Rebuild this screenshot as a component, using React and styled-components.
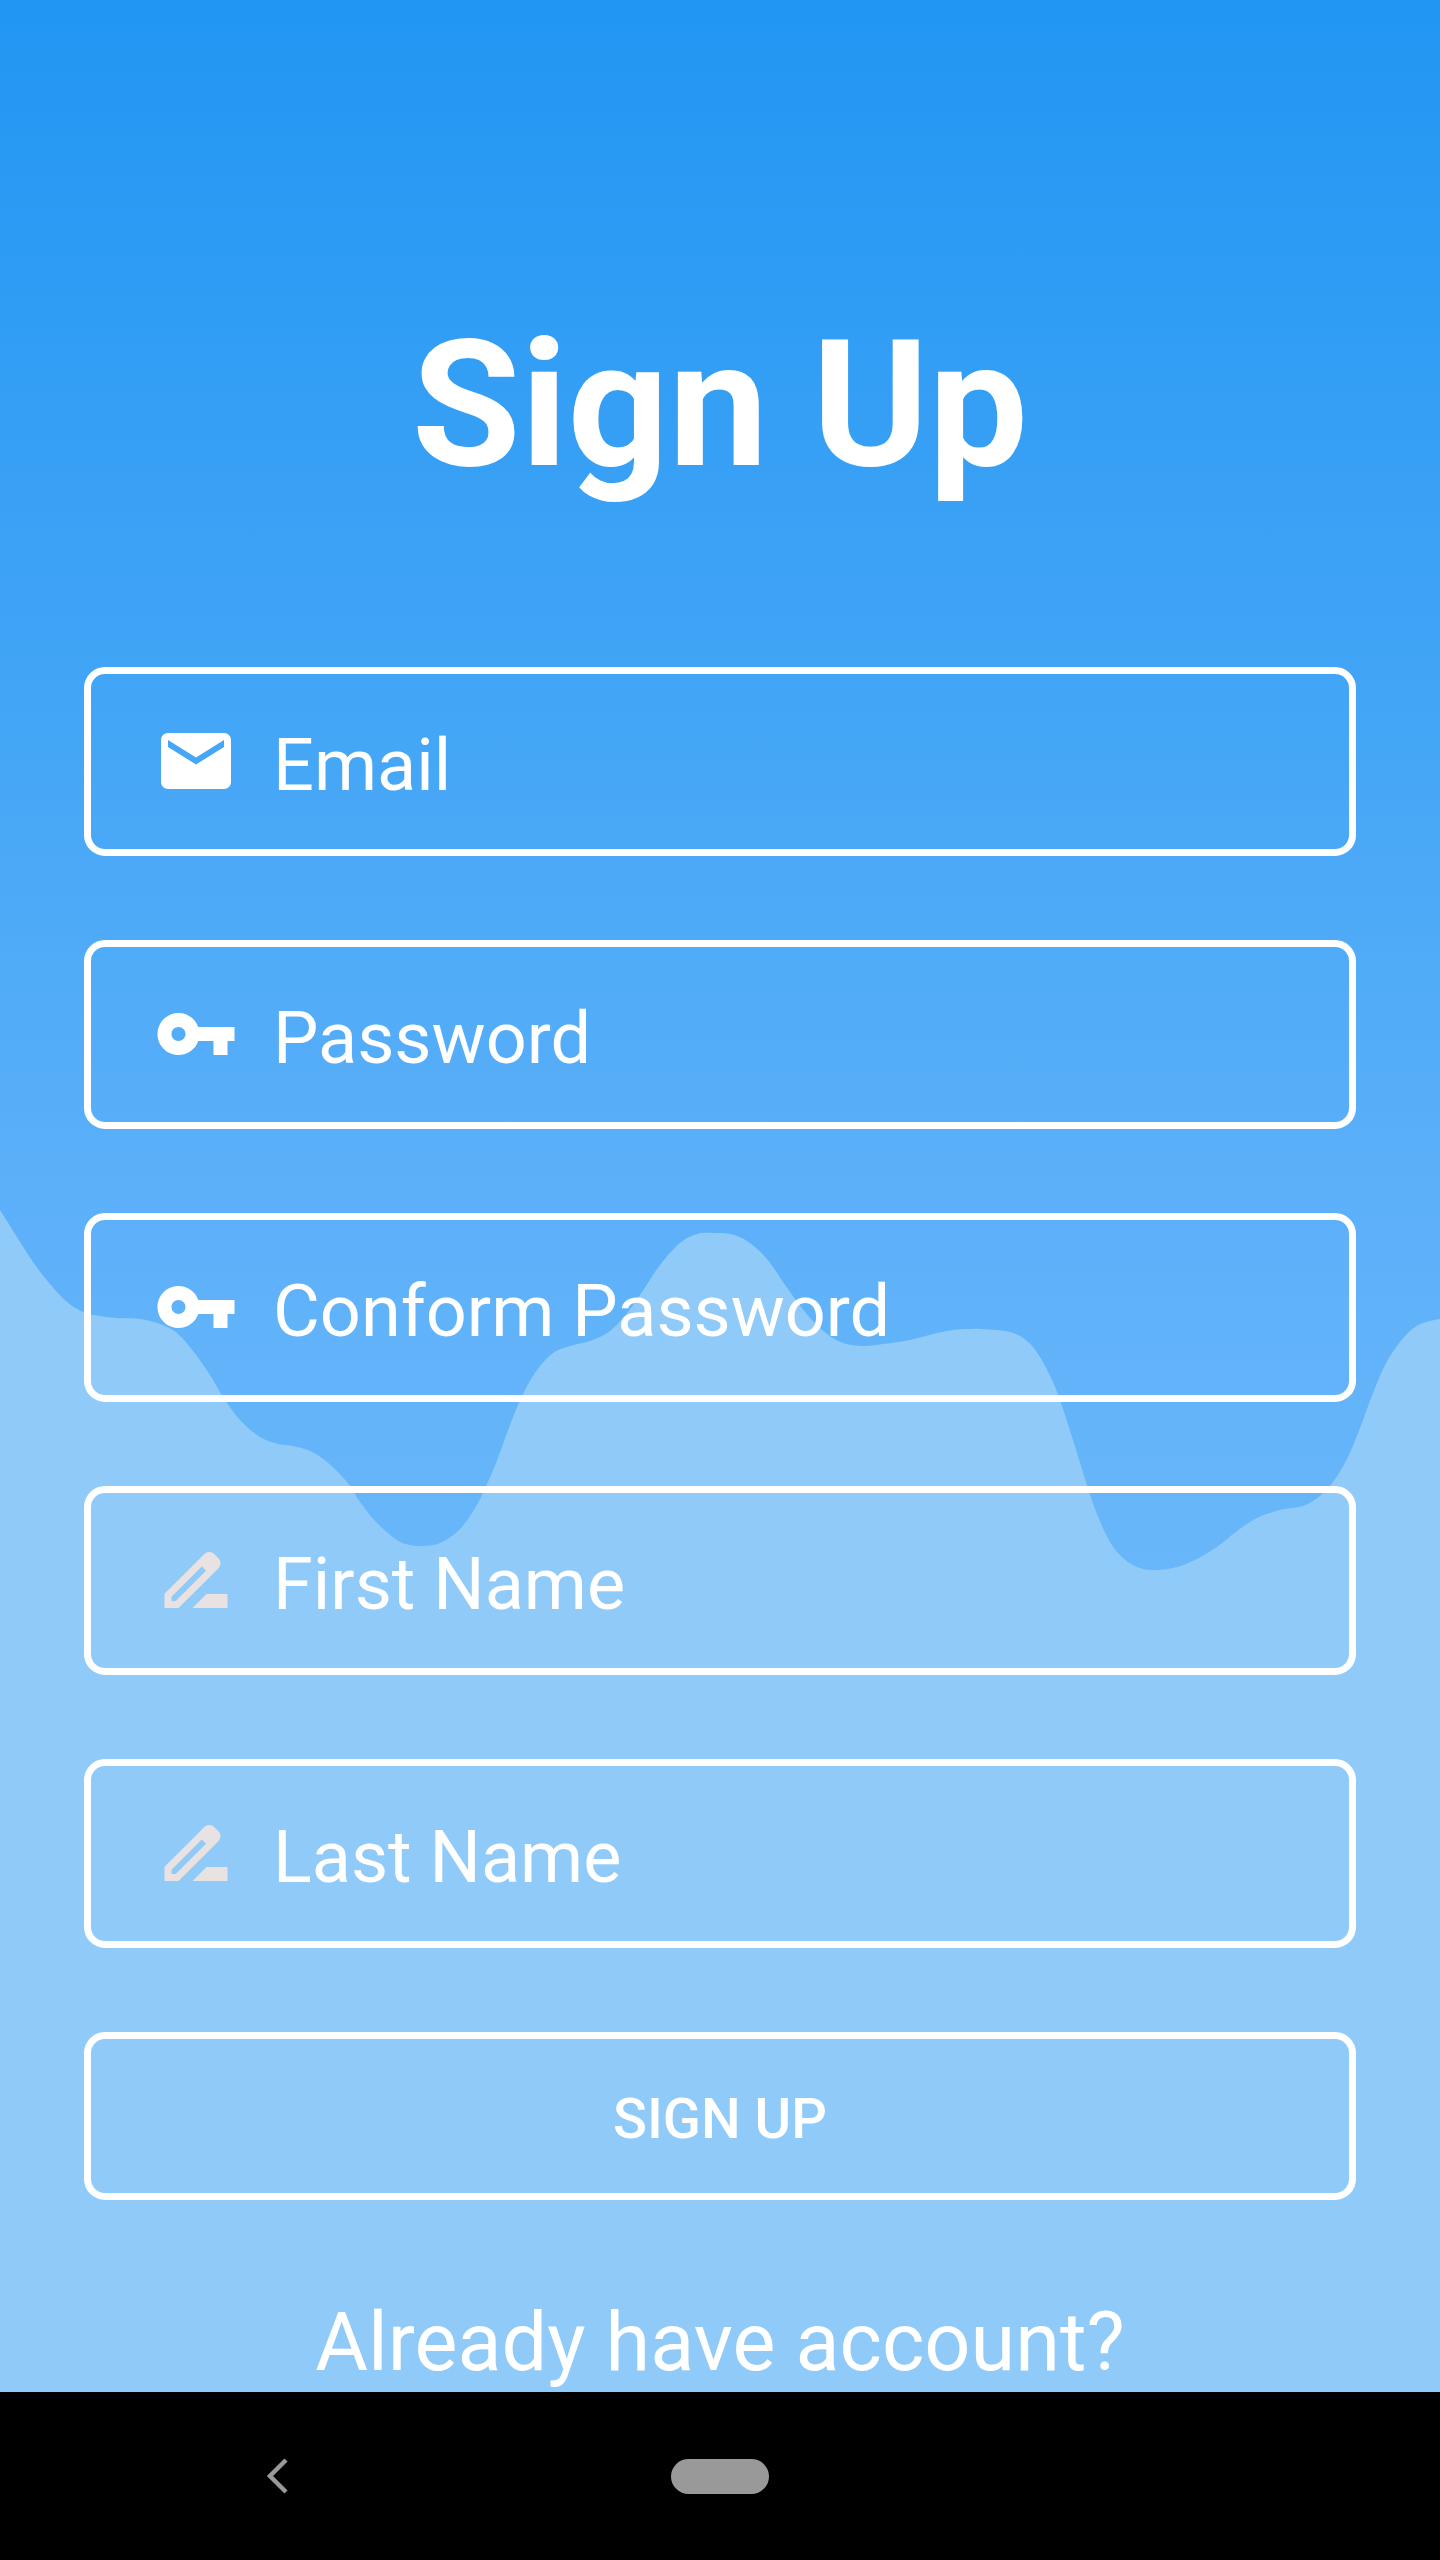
import React from 'react';
import styled, { createGlobalStyle } from 'styled-components';

const Global = createGlobalStyle`
  body { margin: 0; background: #000; }
  * { box-sizing: border-box; }
`;

const Phone = styled.div`
  width: 1440px;
  height: 2560px;
  display: flex;
  flex-direction: column;
  overflow: hidden;
  font-family: Roboto, 'Liberation Sans', sans-serif;
  color: #fff;
`;

const Screen = styled.main`
  position: relative;
  flex: 1;
  min-height: 0;
  overflow: hidden;
  background: linear-gradient(180deg, #2196f3 0px, #42a5f6 690px, #5cb0f9 1200px, #6ab7fa 1600px);
`;

const WaveArt = styled.svg`
  position: absolute;
  inset: 0;
  width: 1440px;
  height: 2392px;
`;

const Form = styled.form`
  position: relative;
  display: flex;
  flex-direction: column;
  gap: 84px;
  padding: 0 84px;
`;

const Title = styled.h1`
  margin: 302px 0 76px;
  height: 205px;
  font-size: 177px;
  line-height: 205px;
  font-weight: 700;
  text-align: center;
`;

const Field = styled.label`
  display: flex;
  align-items: center;
  gap: 35px;
  height: 189px;
  padding: 0 63px 1px;
  border: 7px solid #fff;
  border-radius: 21px;
`;

const FieldIcon = styled.svg`
  width: 84px;
  height: 84px;
  fill: ${(p) => p.$tint};
`;

const FieldLabel = styled.span`
  font-size: 72px;
  line-height: 84px;
  padding-top: 9px;
`;

const Submit = styled.button`
  height: 168px;
  padding: 6px 0 0;
  border: 7px solid #fff;
  border-radius: 21px;
  background: none;
  color: #fff;
  font: 500 56px/66px Roboto, 'Liberation Sans', sans-serif;
`;

const Prompt = styled.p`
  margin: 12px 0 0;
  font-size: 81px;
  line-height: 94px;
  text-align: center;
`;

const NavBar = styled.nav`
  flex: none;
  display: grid;
  grid-template-columns: 554px 332px 554px;
  align-items: center;
  justify-items: center;
  height: 168px;
  background: #000;
`;

const BackArrow = styled.svg`
  width: 84px;
  height: 84px;
`;

const HomePill = styled.span`
  width: 98px;
  height: 35px;
  border-radius: 18px;
  background: #999;
`;

const crest = [
  [-17, 1183], [0, 1210], [17, 1237], [33, 1262], [50, 1284], [67, 1302], [83, 1312], [100, 1316], [117, 1318],
  [140, 1319], [160, 1324], [177, 1333], [193, 1351], [210, 1375], [223, 1397], [240, 1420], [260, 1437],
  [278, 1444], [293, 1446], [310, 1451], [327, 1462], [347, 1482], [360, 1502], [377, 1523], [397, 1540],
  [410, 1545], [423, 1546], [440, 1543], [457, 1532], [470, 1516], [482, 1495], [496, 1463], [510, 1425],
  [523, 1394], [537, 1370], [553, 1353], [570, 1346], [590, 1341], [607, 1333], [623, 1318], [640, 1295],
  [660, 1265], [680, 1243], [697, 1234], [713, 1233], [730, 1234], [747, 1241], [767, 1259], [790, 1292],
  [810, 1318], [827, 1334], [843, 1343], [863, 1346], [883, 1344], [910, 1340], [933, 1334], [953, 1330],
  [968, 1329], [983, 1329], [1010, 1332], [1027, 1341], [1040, 1357], [1052, 1380], [1060, 1400],
  [1073, 1440], [1087, 1485], [1097, 1514], [1110, 1542], [1123, 1558], [1137, 1567], [1152, 1570],
  [1173, 1568], [1193, 1561], [1217, 1547], [1237, 1531], [1257, 1518], [1280, 1510], [1303, 1506],
  [1320, 1496], [1333, 1482], [1347, 1459], [1360, 1428], [1373, 1393], [1385, 1365], [1397, 1346],
  [1410, 1331], [1423, 1323], [1440, 1319], [1460, 1317],
];

function smoothPath(points) {
  let d = `M${points[0].join(' ')}`;
  for (let i = 0; i < points.length - 1; i += 1) {
    const a = points[Math.max(i - 1, 0)];
    const b = points[i];
    const c = points[i + 1];
    const e = points[Math.min(i + 2, points.length - 1)];
    d += `C${b[0] + (c[0] - a[0]) / 6} ${b[1] + (c[1] - a[1]) / 6} ${c[0] - (e[0] - b[0]) / 6} ${c[1] - (e[1] - b[1]) / 6} ${c[0]} ${c[1]}`;
  }
  return d;
}

const icons = {
  mail: 'M20 4H4c-1.1 0-1.99.9-1.99 2L2 18c0 1.1.9 2 2 2h16c1.1 0 2-.9 2-2V6c0-1.1-.9-2-2-2zm0 4l-8 5-8-5V6l8 5 8-5v2z',
  key: 'M12.65 10C11.83 7.67 9.61 6 7 6c-3.31 0-6 2.69-6 6s2.69 6 6 6c2.61 0 4.83-1.67 5.65-4H17v4h4v-4h2v-4H12.65zM7 14c-1.1 0-2-.9-2-2s.9-2 2-2 2 .9 2 2-.9 2-2 2z',
  pen: 'M18.41 5.8L17.2 4.59c-.78-.78-2.05-.78-2.83 0l-2.68 2.68L3 15.96V20h4.04l8.74-8.74 2.63-2.63c.79-.78.79-2.05 0-2.83zM6.21 18H5v-1.21l8.66-8.66 1.21 1.21L6.21 18zM11 20l4-4h6v4H11z',
};

const fields = [
  { label: 'Email', icon: 'mail', tint: '#fff' },
  { label: 'Password', icon: 'key', tint: '#fff' },
  { label: 'Conform Password', icon: 'key', tint: '#fff' },
  { label: 'First Name', icon: 'pen', tint: '#e8e2e2' },
  { label: 'Last Name', icon: 'pen', tint: '#e8e2e2' },
];

export default function App() {
  return (
    <Phone>
      <Global />
      <Screen>
        <WaveArt viewBox="0 0 1440 2392" aria-hidden="true">
          <path d={`${smoothPath(crest)}V2392H-20Z`} fill="#90caf9" />
        </WaveArt>
        <Form>
          <Title>Sign Up</Title>
          {fields.map((f) => (
            <Field key={f.label}>
              <FieldIcon viewBox="0 0 24 24" $tint={f.tint}>
                <path d={icons[f.icon]} />
              </FieldIcon>
              <FieldLabel>{f.label}</FieldLabel>
            </Field>
          ))}
          <Submit type="button">SIGN UP</Submit>
          <Prompt>Already have account?</Prompt>
        </Form>
      </Screen>
      <NavBar>
        <BackArrow viewBox="0 0 84 84">
          <path d="M51 26L35 42L51 58" fill="none" stroke="#999" strokeWidth="4.5" />
        </BackArrow>
        <HomePill />
      </NavBar>
    </Phone>
  );
}
